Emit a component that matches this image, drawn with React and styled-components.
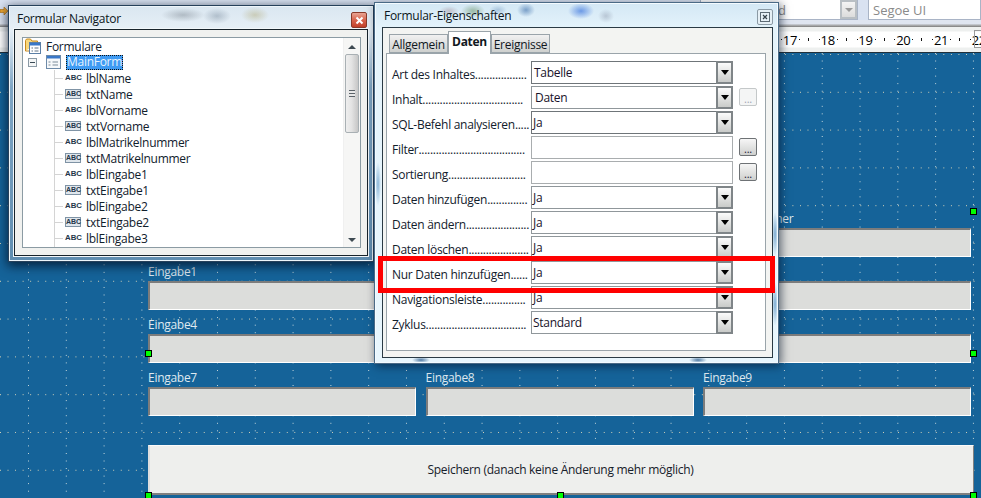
import React from "react";
import styled, { createGlobalStyle } from "styled-components";

const GlobalStyle = createGlobalStyle`
  html, body { margin: 0; padding: 0; background: #156399; }
  body {
    font-family: "Open Sans", "Noto Sans", sans-serif;
    font-size: 12px;
    letter-spacing: -0.28px;
    color: #111;
  }
`;

const Page = styled.div`
  position: relative;
  display: flex;
  flex-direction: column;
  width: 981px;
  height: 498px;
  overflow: hidden;
`;

/* office chrome behind the dialogs */
const TopBar = styled.div`
  height: 53px;
  flex: none;
  display: flex;
  flex-direction: column;
  background: #dbe3f1;
`;

const Toolbar = styled.div`
  height: 20px;
  flex: none;
  display: flex;
  gap: 10px;
  background: #d9e2f1;
`;

const ToolbarArrow = styled.svg`
  flex: none;
  margin: 7px auto 0 0;
`;

const ToolbarCombo = styled.div`
  display: flex;
  align-items: center;
  justify-content: space-between;
  width: ${p => p.$width}px;
  height: 20px;
  box-sizing: border-box;
  border: 1px solid #a9b4c6;
  border-top: none;
  background: #fff;
  padding-left: ${p => p.$pad}px;
  color: #8a8a8a;
  font-size: 13px;
  letter-spacing: 0;
  flex: none;
`;

const ToolbarDrop = styled.div`
  width: 17px;
  height: 19px;
  box-sizing: border-box;
  border: 2px solid #b9bfc4;
  background: linear-gradient(#f4f4f4, #dcdcdc);
  display: flex;
  align-items: center;
  justify-content: center;
  &::after {
    content: "";
    border-left: 4px solid transparent;
    border-right: 4px solid transparent;
    border-top: 4px solid #9a9a9a;
  }
`;

const ToolbarShade = styled.div`
  height: 7px;
  flex: none;
  background: linear-gradient(#dfe5f0 0, #dfe5f0 50%, #9a9a9a 85%, #7d7d7d 100%);
`;

const Ruler = styled.div`
  height: 26px;
  flex: none;
  display: flex;
  align-items: center;
  box-sizing: border-box;
  padding-left: 771px;
  background: linear-gradient(#eef0ef 0, #eef0ef 4px, #fff 5px, #fff 20px, #eef0ef 21px);
  border-bottom: 1px solid #20303a;
`;

const RulerCell = styled.div`
  position: relative;
  width: 37.8px;
  flex: none;
  display: flex;
  align-items: center;
  height: 100%;
  &::before {
    content: "";
    position: absolute;
    left: 37px;
    top: 11px;
    width: 1px;
    height: 3px;
    background: #111;
  }
`;

const RulerDot = styled.i`
  position: absolute;
  left: ${p => p.$x}px;
  top: 12px;
  width: 1px;
  height: 1px;
  background: #111;
`;

const RulerNum = styled.span`
  width: 100%;
  text-align: center;
  font-size: 13px;
  color: #000;
`;

const RulerMark = styled.div`
  position: absolute;
  left: ${p => p.$x}px;
  top: 3px;
  width: 8px;
  height: 18px;
  border: 1px solid #9a9a9a;
  box-sizing: border-box;
`;

const Canvas = styled.div`
  flex: 1;
  box-sizing: border-box;
  padding: 151px 0 0 148px;
  background-color: #156399;
  background-image:
    conic-gradient(from 270deg at 1px 1px, rgba(250, 232, 190, 0.85) 90deg, transparent 0),
    conic-gradient(from 270deg at 1px 1px, rgba(235, 240, 235, 0.85) 90deg, transparent 0);
  background-size: 7.56px 37.8px, 37.8px 7.56px;
  background-position: 0 1px, 28px 0;
`;

const FieldGrid = styled.div`
  display: grid;
  grid-template-columns: 268px 268px 268px;
  column-gap: 9.5px;
  grid-auto-rows: 53px;
`;

const FieldGroup = styled.div`
  display: flex;
  flex-direction: column;
`;

const FieldLabel = styled.div`
  height: 24px;
  line-height: 17px;
  color: #dfe9f0;
  font-size: 12px;
  padding-top: 6px;
  box-sizing: border-box;
`;

const Field = styled.div`
  height: 29px;
  box-sizing: border-box;
  background: #dcdddb;
  border-style: solid;
  border-width: 2px 1px 1px 2px;
  border-color: #7c7c7c #fff #fff #7c7c7c;
`;

const SaveButton = styled.div`
  margin-top: 29px;
  width: 826px;
  height: 50px;
  box-sizing: border-box;
  display: flex;
  align-items: center;
  justify-content: center;
  padding-right: 2px;
  background: #eeefed;
  border-style: solid;
  border-width: 1px 1px 2px 2px;
  border-color: #fbfbfb #808080 #808080 #dedede;
  color: #16202a;
  font-size: 12px;
`;

const Handle = styled.div`
  position: absolute;
  left: ${p => p.$x}px;
  top: ${p => p.$y}px;
  width: 7px;
  height: 7px;
  box-sizing: border-box;
  border: 1px solid #000;
  background: #00ff00;
`;

/* aero glass windows float over the document */
const NavWindow = styled.div`
  position: absolute;
  left: 9px;
  top: 6px;
  width: 364px;
  height: 255px;
  box-sizing: border-box;
  display: flex;
  flex-direction: column;
  padding: 0 4px 4px 4px;
  border: 1px solid #eef5fa;
  outline: 1px solid #26405a;
  box-shadow: 0 3px 10px 2px rgba(0, 15, 35, 0.75);
  background:
    radial-gradient(ellipse 22px 7px at 173px 8px, rgba(90, 100, 110, 0.35), transparent),
    radial-gradient(ellipse 14px 8px at 207px 9px, rgba(90, 110, 130, 0.35), transparent),
    radial-gradient(ellipse 14px 8px at 245px 8px, rgba(170, 160, 100, 0.4), transparent),
    linear-gradient(#dbe7f1 0, #e6eff6 22px, #d3e2ee 36px, #7fa6c4 80px, #5f8db0 100%);
`;

const PropWindow = styled.div`
  position: absolute;
  left: 375px;
  top: 3px;
  width: 403px;
  height: 360px;
  box-sizing: border-box;
  display: flex;
  flex-direction: column;
  padding: 0 4px 4px 6px;
  border: 1px solid #f4fbff;
  outline: 1px solid #4a6a86;
  box-shadow: 2px 2px 9px 1px rgba(0, 15, 35, 0.6);
  background:
    radial-gradient(ellipse 10px 5px at 73px 7px, rgba(150, 120, 130, 0.4), transparent),
    radial-gradient(ellipse 12px 7px at 97px 7px, rgba(110, 150, 110, 0.6), transparent),
    radial-gradient(ellipse 9px 5px at 122px 6px, rgba(110, 150, 190, 0.45), transparent),
    radial-gradient(ellipse 9px 7px at 150px 6px, rgba(60, 110, 170, 0.6), transparent),
    radial-gradient(ellipse 13px 8px at 205px 7px, rgba(50, 110, 220, 0.65), transparent),
    radial-gradient(ellipse 8px 7px at 230px 12px, rgba(130, 140, 160, 0.4), transparent),
    radial-gradient(ellipse 9px 3px at 45px 356px, rgba(40, 90, 140, 0.8), transparent),
    radial-gradient(ellipse 9px 3px at 322px 356px, rgba(40, 90, 140, 0.8), transparent),
    radial-gradient(ellipse 3px 22px at 2px 180px, rgba(50, 120, 180, 0.5), transparent),
    radial-gradient(ellipse 3px 22px at 399px 230px, rgba(50, 120, 180, 0.6), transparent),
    radial-gradient(ellipse 3px 22px at 399px 300px, rgba(50, 120, 180, 0.6), transparent),
    linear-gradient(#d4e8f5 0, #e4f3fb 24px, #e8f6fd 100%);
`;

const TitleBar = styled.div`
  flex: none;
  height: ${p => p.$height}px;
  display: flex;
  align-items: center;
  justify-content: space-between;
  padding-left: ${p => p.$pad}px;
  font-size: 12px;
  color: #0c1620;
`;

const CloseRed = styled.div`
  width: 16px;
  height: 16px;
  box-sizing: border-box;
  margin: 4px 1px 0 0;
  display: flex;
  align-items: center;
  justify-content: center;
  border: 1px solid #8a3a2a;
  border-radius: 2px;
  background: linear-gradient(#e9a493 0, #d8654e 50%, #c2402a 100%);
`;

const CloseDocked = styled.div`
  width: 16px;
  height: 16px;
  box-sizing: border-box;
  margin: 3px 0 0 0;
  display: flex;
  align-items: center;
  justify-content: center;
  border: 1px solid #8b9aa5;
  border-radius: 2px;
  background: #e6f0f6;
`;

const NavFrame = styled.div`
  flex: 1;
  min-height: 0;
  display: flex;
  box-sizing: border-box;
  border: 1px solid #17232b;
  outline: 1px solid #f2f7fa;
  background: #f0f1ef;
  padding: 7px 6px 7px 7px;
`;

const TreeBox = styled.div`
  flex: 1;
  display: flex;
  box-sizing: border-box;
  border: 1px solid #8b9ba3;
  background: #fff;
`;

const TreeList = styled.div`
  flex: 1;
  overflow: hidden;
`;

const TreeRow = styled.div`
  position: relative;
  display: flex;
  align-items: center;
  height: ${p => (p.$stub ? 2 : 16)}px;
  padding-left: ${p => p.$indent}px;
  white-space: nowrap;
  font-size: 12px;
  color: #10202c;
  ${p =>
    p.$leaf &&
    `
    &::before {
      content: "";
      position: absolute;
      left: 31px;
      top: 8px;
      width: 9px;
      height: 1px;
      background: #d4d4d4;
    }
    &::after {
      content: "";
      position: absolute;
      left: 31px;
      top: 0;
      width: 1px;
      height: 100%;
      background: #d4d4d4;
    }
  `}
`;

const TreeText = styled.span`
  margin-left: ${p => p.$gap}px;
`;

const TreeSelected = styled.span`
  margin-left: 5px;
  padding: 0 1px;
  height: 15px;
  line-height: 14px;
  box-sizing: border-box;
  background: #3f9bf3;
  color: #e6f3ff;
  outline: 1px dotted #111;
  outline-offset: -1px;
`;

const Expander = styled.div`
  width: 9px;
  height: 9px;
  box-sizing: border-box;
  border: 1px solid #8b9aa5;
  margin-right: 9px;
  background: #f4f6f6;
  display: flex;
  align-items: center;
  justify-content: center;
  &::after {
    content: "";
    width: 5px;
    height: 1px;
    background: #3a4a55;
  }
`;

const AbcLabel = styled.span`
  width: 16px;
  flex: none;
  text-align: center;
  font: 700 7.8px/10px "Liberation Sans", sans-serif;
  letter-spacing: 0;
  color: #24364a;
`;

const AbcBox = styled(AbcLabel)`
  height: 10px;
  box-sizing: border-box;
  line-height: 8px;
  font-size: 7px;
  border: 1px solid #7f93a5;
  background: #dfe6ec;
`;

const ScrollBar = styled.div`
  width: 16px;
  flex: none;
  display: flex;
  flex-direction: column;
  align-items: center;
  background: #f6f6f5;
  border-left: 1px solid #f0f0f0;
`;

const ScrollArrow = styled.div`
  flex: none;
  width: 0;
  height: 0;
  margin: ${p => p.$margin};
  border-left: 4px solid transparent;
  border-right: 4px solid transparent;
  ${p => (p.$up ? "border-bottom: 4px solid #3e4a52;" : "border-top: 4px solid #3e4a52;")}
`;

const ScrollThumb = styled.div`
  width: 14px;
  height: 79px;
  box-sizing: border-box;
  border: 1px solid #a9b0b4;
  border-radius: 2px;
  background: linear-gradient(90deg, #eeeeee, #e4e4e4 45%, #c6c6c6);
  display: flex;
  align-items: center;
  justify-content: center;
  margin-bottom: auto;
  &::after {
    content: "";
    width: 6px;
    height: 7px;
    background: repeating-linear-gradient(#5a6268 0, #5a6268 1px, #e8e8e8 1px, #e8e8e8 3px);
  }
`;

const PropFrame = styled.div`
  flex: 1;
  min-height: 0;
  display: flex;
  flex-direction: column;
  box-sizing: border-box;
  border: 1px solid #2a3a44;
  background: #f3f4f2;
  padding: 3px 6px 6px 3px;
`;

const TabRow = styled.div`
  flex: none;
  display: flex;
  height: 22px;
  padding-left: 3px;
`;

const Tab = styled.div`
  position: relative;
  z-index: ${p => (p.$active ? 1 : 0)};
  box-sizing: border-box;
  width: ${p => p.$width}px;
  height: ${p => (p.$active ? 23 : 19)}px;
  margin-top: ${p => (p.$active ? 0 : 3)}px;
  line-height: 19px;
  text-align: center;
  font-size: 12px;
  font-weight: ${p => (p.$active ? 700 : 400)};
  color: #10181e;
  border: 1px solid #9aa4aa;
  border-bottom: ${p => (p.$active ? "none" : "1px solid #9aa4aa")};
  background: ${p => (p.$active ? "#fff" : "linear-gradient(#f1f1f1, #cfd1cf)")};
`;

const TabPanel = styled.div`
  flex: 1;
  box-sizing: border-box;
  border: 1px solid #9aa4aa;
  background: #fff;
  padding: 7px 0 0 5px;
`;

const PropRow = styled.div`
  display: flex;
  align-items: center;
  height: 23px;
  margin-bottom: 2px;
`;

const PropLabel = styled.div`
  width: 139px;
  flex: none;
  padding-top: 3px;
  white-space: nowrap;
  font-size: 12px;
  color: #12202c;
`;

const Combo = styled.div`
  width: 202px;
  height: 23px;
  flex: none;
  display: flex;
  align-items: center;
  justify-content: space-between;
  box-sizing: border-box;
  border: 1px solid ${p => (p.$dark ? "#6f7579" : "#90979b")};
  background: #fff;
  padding-left: ${p => p.$pad || 1}px;
  font-size: 12px;
  color: #18122a;
`;

const ComboText = styled.span`
  margin-top: -1px;
`;

const DropButton = styled.div`
  width: 17px;
  height: 23px;
  margin: -1px -1px -1px 0;
  box-sizing: border-box;
  border: 2px solid #7f8588;
  background: linear-gradient(#fbfbfb, #c9cbc9);
  display: flex;
  align-items: center;
  justify-content: center;
  &::after {
    content: "";
    border-left: 4px solid transparent;
    border-right: 4px solid transparent;
    border-top: 5px solid #000;
    margin-top: -1px;
  }
`;

const TextField = styled.div`
  width: 202px;
  height: 23px;
  flex: none;
  box-sizing: border-box;
  border: 1px solid #a9adaf;
  background: #fff;
`;

const BrowseButton = styled.div`
  width: 18px;
  height: 18px;
  flex: none;
  margin: 0 0 1px 6px;
  box-sizing: border-box;
  display: flex;
  align-items: flex-end;
  justify-content: center;
  border: 1px solid ${p => (p.$disabled ? "#c4c8c9" : "#6e7275")};
  border-radius: 2px;
  background: ${p => (p.$disabled ? "#f4f5f5" : "linear-gradient(#f6f6f6, #cfd0ce)")};
  color: ${p => (p.$disabled ? "#a0a4b4" : "#223")};
  font-size: 11px;
  line-height: 12px;
`;

const Highlight = styled.div`
  position: absolute;
  left: 378px;
  top: 256px;
  width: 397px;
  height: 37px;
  box-sizing: border-box;
  border: 5px solid #ff0000;
`;

const FolderIcon = () => (
  <svg width="16" height="16" viewBox="0 0 16 16" style={{ flex: "none" }}>
    <path d="M0.5 13V2.5L1.5 1H5.5L7 3H12.5V5" fill="#f7d77c" stroke="#c98a1c" />
    <path d="M0.5 13H4" stroke="#c98a1c" />
    <rect x="4.5" y="4.5" width="11" height="11" fill="#fff" stroke="#5b7fa6" />
    <rect x="5" y="5" width="10" height="2.5" fill="#3a78c8" />
    <path d="M6.5 10H8M9.5 10H13.5M6.5 13H8M9.5 13H13.5" stroke="#5e7386" />
  </svg>
);

const FormIcon = () => (
  <svg width="15" height="14" viewBox="0 0 15 14" style={{ flex: "none" }}>
    <rect x="0.5" y="0.5" width="14" height="13" fill="#f6f8fa" stroke="#6d8aa8" />
    <rect x="1" y="1" width="13" height="2.5" fill="#3a78c8" />
    <path d="M2.5 7H4.5M6.5 7H12M2.5 10H4.5M6.5 10H12" stroke="#7b8b99" />
  </svg>
);

const SmallX = ({ color, size }) => (
  <svg width={size} height={size} viewBox="0 0 9 9">
    <path d="M1.5 1.5L7.5 7.5M7.5 1.5L1.5 7.5" stroke={color} strokeWidth="2" />
  </svg>
);

const DockedX = () => (
  <svg width="10" height="10" viewBox="0 0 10 10">
    <rect x="0.5" y="0.5" width="9" height="9" fill="none" stroke="#5d6b75" />
    <path d="M3 3L7 7M7 3L3 7" stroke="#36424a" strokeWidth="1.2" />
  </svg>
);

const treeItems = [
  "lblName",
  "txtName",
  "lblVorname",
  "txtVorname",
  "lblMatrikelnummer",
  "txtMatrikelnummer",
  "lblEingabe1",
  "txtEingabe1",
  "lblEingabe2",
  "txtEingabe2",
  "lblEingabe3"
];

// labels under the two dialogs can't be read in the shot, so they stay empty
const fieldLabels = [
  "",
  "",
  "Matrikelnummer",
  "Eingabe1",
  "",
  "",
  "Eingabe4",
  "",
  "",
  "Eingabe7",
  "Eingabe8",
  "Eingabe9"
];

const props = [
  { label: "Art des Inhaltes", dots: 18, value: "Tabelle", dark: true, pad: 2 },
  { label: "Inhalt", dots: 35, value: "Daten", pad: 3, browse: "off" },
  { label: "SQL-Befehl analysieren", dots: 5, value: "Ja", dark: true },
  { label: "Filter", dots: 37, browse: "on" },
  { label: "Sortierung", dots: 27, browse: "on" },
  { label: "Daten hinzufügen", dots: 14, value: "Ja" },
  { label: "Daten ändern", dots: 22, value: "Ja" },
  { label: "Daten löschen", dots: 21, value: "Ja" },
  { label: "Nur Daten hinzufügen", dots: 6, value: "Ja" },
  { label: "Navigationsleiste", dots: 15, value: "Ja" },
  { label: "Zyklus", dots: 35, value: "Standard" }
];

const handles = [
  [145, 350],
  [145, 492],
  [557, 492],
  [970, 208],
  [970, 350],
  [970, 492]
];

const App = () => (
  <Page>
    <GlobalStyle />
    <TopBar>
      <Toolbar>
        <ToolbarArrow width="8" height="8" viewBox="0 0 8 8">
          <path d="M0 2.5H4V0L8 4L4 8V5.5H0Z" fill="#f0a830" stroke="#a86a10" strokeWidth="0.6" />
        </ToolbarArrow>
        <ToolbarCombo $width={158} $pad={77}>
          d
          <ToolbarDrop />
        </ToolbarCombo>
        <ToolbarCombo $width={113} $pad={4}>
          Segoe UI
        </ToolbarCombo>
      </Toolbar>
      <ToolbarShade />
      <Ruler>
        {[17, 18, 19, 20, 21].map(n => (
          <RulerCell key={n}>
            <RulerDot $x={10} />
            <RulerNum>{n}</RulerNum>
            <RulerDot $x={28} />
          </RulerCell>
        ))}
        <RulerCell>
          <RulerDot $x={10} />
          <RulerMark $x={14} />
          <RulerNum>22</RulerNum>
        </RulerCell>
      </Ruler>
    </TopBar>

    <Canvas>
      <FieldGrid>
        {fieldLabels.map((label, i) => (
          <FieldGroup key={i}>
            <FieldLabel>{label}</FieldLabel>
            <Field />
          </FieldGroup>
        ))}
      </FieldGrid>
      <SaveButton>Speichern (danach keine Änderung mehr möglich)</SaveButton>
    </Canvas>

    {handles.map(([x, y]) => (
      <Handle key={`${x}-${y}`} $x={x} $y={y} />
    ))}

    <NavWindow>
      <TitleBar $height={22} $pad={3}>
        Formular Navigator
        <CloseRed>
          <SmallX color="#fff" size={9} />
        </CloseRed>
      </TitleBar>
      <NavFrame>
        <TreeBox>
          <TreeList>
            <TreeRow $indent={2}>
              <FolderIcon />
              <TreeText $gap={5}>Formulare</TreeText>
            </TreeRow>
            <TreeRow $indent={5}>
              <Expander />
              <FormIcon />
              <TreeSelected>MainForm</TreeSelected>
            </TreeRow>
            {treeItems.map(name => (
              <TreeRow key={name} $leaf $indent={42}>
                {name.startsWith("lbl") ? <AbcLabel>ABC</AbcLabel> : <AbcBox>ABC</AbcBox>}
                <TreeText $gap={5}>{name}</TreeText>
              </TreeRow>
            ))}
            <TreeRow $leaf $stub />
          </TreeList>
          <ScrollBar>
            <ScrollArrow $up $margin="7px 0 5px" />
            <ScrollThumb />
            <ScrollArrow $margin="0 0 5px" />
          </ScrollBar>
        </TreeBox>
      </NavFrame>
    </NavWindow>

    <PropWindow>
      <TitleBar $height={23} $pad={2}>
        Formular-Eigenschaften
        <CloseDocked>
          <DockedX />
        </CloseDocked>
      </TitleBar>
      <PropFrame>
        <TabRow>
          <Tab $width={59}>Allgemein</Tab>
          <Tab $width={43} $active>
            Daten
          </Tab>
          <Tab $width={59}>Ereignisse</Tab>
        </TabRow>
        <TabPanel>
          {props.map(p => (
            <PropRow key={p.label}>
              <PropLabel>{p.label + ".".repeat(p.dots)}</PropLabel>
              {p.value ? (
                <Combo $dark={p.dark} $pad={p.pad}>
                  <ComboText>{p.value}</ComboText>
                  <DropButton />
                </Combo>
              ) : (
                <TextField />
              )}
              {p.browse && <BrowseButton $disabled={p.browse === "off"}>...</BrowseButton>}
            </PropRow>
          ))}
        </TabPanel>
      </PropFrame>
    </PropWindow>

    <Highlight />
  </Page>
);

export default App;
